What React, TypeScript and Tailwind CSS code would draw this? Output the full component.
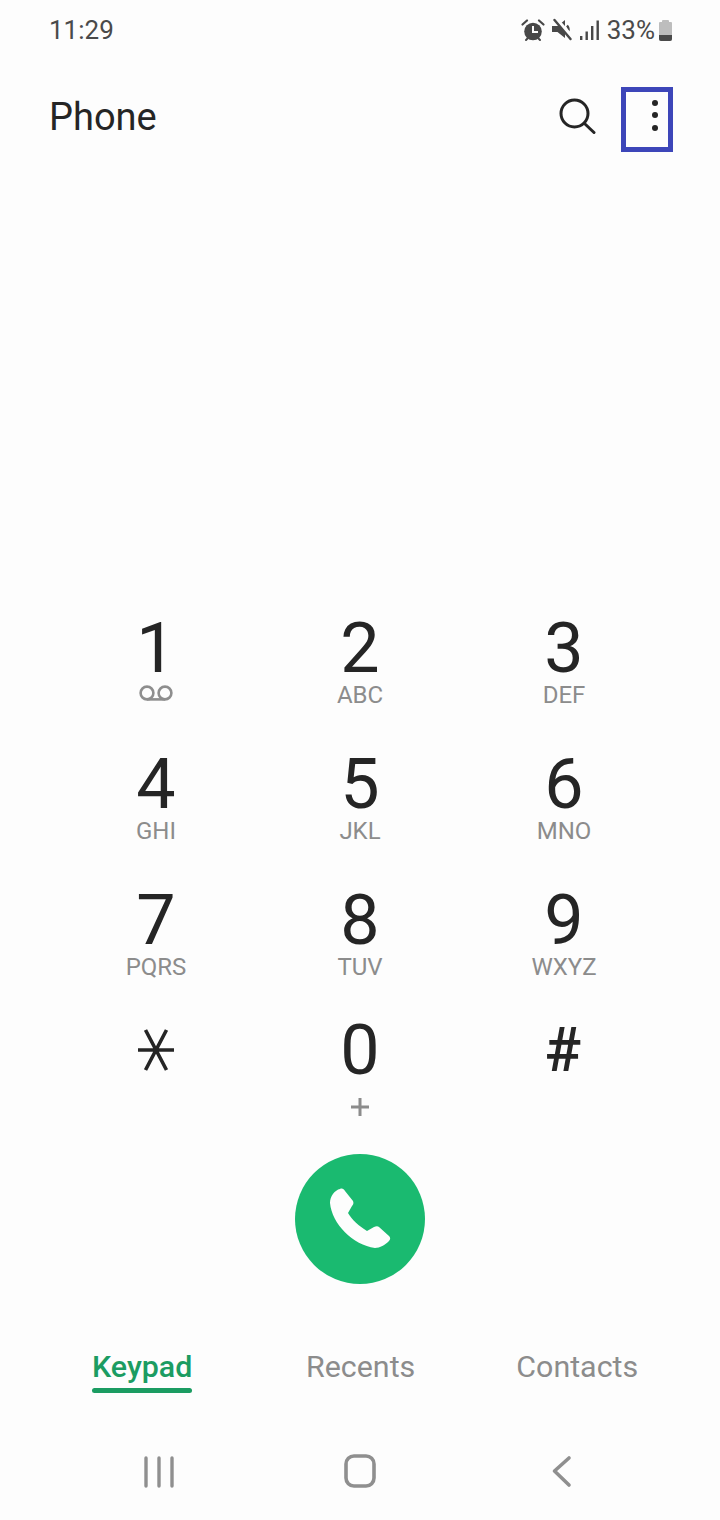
import React from "react";

const keys: { d: string; s?: string }[] = [
  { d: "1" },
  { d: "2", s: "ABC" },
  { d: "3", s: "DEF" },
  { d: "4", s: "GHI" },
  { d: "5", s: "JKL" },
  { d: "6", s: "MNO" },
  { d: "7", s: "PQRS" },
  { d: "8", s: "TUV" },
  { d: "9", s: "WXYZ" },
];

function Voicemail() {
  return (
    <svg width="36" height="16" viewBox="0 0 36 16" fill="none" stroke="#8e8e8e" strokeWidth="2.6" className="mb-[5px]">
      <circle cx="9" cy="8" r="6.4" />
      <circle cx="27" cy="8" r="6.4" />
      <path d="M9 14.4h18" />
    </svg>
  );
}

function Key({ d, s, voice }: { d: React.ReactNode; s?: string; voice?: boolean }) {
  return (
    <div className="flex flex-col items-center">
      <div className="h-[64px] flex items-center justify-center text-[70px] leading-[64px] text-[#252525]">{d}</div>
      <div className="h-[30px] flex items-center justify-center text-[24px] leading-[28px] text-[#8c8c8c]">
        {voice ? <Voicemail /> : s}
      </div>
    </div>
  );
}

export default function App() {
  return (
    <div className="w-[720px] h-[1520px] bg-[#fdfdfd] flex flex-col font-['Roboto',sans-serif] overflow-hidden">
      <div className="h-[60px] pl-[49px] pr-[48px] pt-[14px] flex justify-between items-start text-[#4a4a4a]">
        <span className="text-[26px] leading-[32px]">11:29</span>
        <div className="flex items-center h-[32px]">
          <svg width="24" height="24" viewBox="0 0 24 24" fill="#484848" className="mr-[7px]">
            <circle cx="12" cy="13.5" r="8.8" />
            <path d="M1.5 6.5 6 2.5M22.5 6.5 18 2.5" stroke="#484848" strokeWidth="2.2" strokeLinecap="round" />
            <path d="M12 8v6h5" stroke="#fdfdfd" strokeWidth="2" fill="none" />
            <path d="M5 22l2-2M19 22l-2-2" stroke="#484848" strokeWidth="2" strokeLinecap="round" />
          </svg>
          <svg width="20" height="24" viewBox="0 0 20 24" fill="#484848" className="mr-[8px]">
            <path d="M0 8h5.5L13 2v18l-7.500-6H0z" />
            <path d="M15 7.500c1.500 1.800 2 3.800 1.500 6" stroke="#484848" strokeWidth="2.200" fill="none" />
            <path d="M4.500 2 20 19" stroke="#fdfdfd" strokeWidth="4.500" />
            <path d="M2.500 2 18.500 21" stroke="#484848" strokeWidth="2.400" strokeLinecap="round" />
          </svg>
          <svg width="19" height="20" viewBox="0 0 19 20" fill="#484848" className="mr-[8px]">
            <rect x="0" y="16" width="2.4" height="4" />
            <rect x="5.5" y="11.5" width="2.4" height="8.5" />
            <rect x="11" y="6" width="2.4" height="14" />
            <rect x="16.5" y="0.5" width="2.4" height="19.500" />
          </svg>
          <span className="text-[26px] leading-[32px] mr-[4px]">33%</span>
          <div className="w-[13px] h-[21px] flex flex-col">
            <div className="h-[2px] w-[7px] mx-auto bg-[#bdbdbd] rounded-t-[1px]" />
            <div className="flex-1 bg-[#bdbdbd] rounded-t-[1px] flex flex-col justify-end rounded-b-[2px] overflow-hidden">
              <div className="h-[6px] bg-[#4a4a4a]" />
            </div>
          </div>
        </div>
      </div>

      <div className="h-[92px] pl-[49px] pr-[47px] flex justify-between items-start">
        <h1 className="text-[38px] leading-[44px] font-normal text-[#252525] mt-[35px]">Phone</h1>
        <div className="flex items-start">
          <svg width="38" height="38" viewBox="0 0 38 38" fill="none" stroke="#252525" strokeWidth="3" strokeLinecap="round" className="mr-[25px] mt-[37px]">
            <circle cx="16.5" cy="16.5" r="13.5" />
            <path d="M26.5 26.5 36 35.5" />
          </svg>
          <button className="w-[52px] h-[65px] mt-[27px] border-[5px] border-[#3d46b9] flex flex-col items-center justify-center gap-[6.5px] pl-[16px] pb-[9px] box-border">
            <span className="w-[6px] h-[6px] rounded-full bg-[#252525]" />
            <span className="w-[6px] h-[6px] rounded-full bg-[#252525]" />
            <span className="w-[6px] h-[6px] rounded-full bg-[#252525]" />
          </button>
        </div>
      </div>

      <div className="mt-[464px] px-[54px] grid grid-cols-3 auto-rows-[136px]">
        {keys.map((k) => (
          <Key key={k.d} d={k.d} s={k.s} voice={k.d === "1"} />
        ))}
      </div>

      <div className="-mt-[6px] px-[54px] grid grid-cols-3">
        <Key d={<svg width="36" height="42" viewBox="0 0 36 42" stroke="#252525" strokeWidth="3.6" fill="none"><path d="M0 21h36M7.500 41 28.500 1M28.500 41 7.500 1" /></svg>} />
        <div className="flex flex-col items-center">
          <div className="h-[64px] flex items-center justify-center text-[70px] leading-[64px] text-[#252525]">0</div>
          <div className="h-[50px] flex items-center justify-center text-[#8c8c8c]">
            <svg width="18" height="18" viewBox="0 0 18 18" stroke="#8c8c8c" strokeWidth="3"><path d="M0 9h18M9 0v18" /></svg>
          </div>
        </div>
        <div className="h-[64px] flex items-center justify-center text-[61px] leading-[64px] text-[#252525] font-medium pr-[2px]">#</div>
      </div>

      <div className="flex justify-center mt-[22px]">
        <button className="w-[130px] h-[130px] rounded-full bg-[#1aba70] flex items-center justify-center">
          <svg width="70" height="70" viewBox="0 0 70 70" fill="#fdfdfd">
            <path d="M5 19C5 12 10 6 15 5C17 4 19 5 20 7L28 17C29 19 28 21 27 22L23 29C27 36 34 42 42 47L49 43C51 42 53 42 54 43L64 52C66 54 65 56 64 57C60 61 55 64 50 64C28 61 7 40 5 19Z" />
          </svg>
        </button>
      </div>

      <div className="mt-[63px] relative h-[60px] text-[30.4px] leading-[40px] text-[#8c8c8c]">
        <div className="flex">
          <div className="ml-[92px] w-[100px] flex flex-col">
            <span className="font-medium text-[#1b9c62] text-center">Keypad</span>
            <div className="h-[5px] mt-[1px] rounded-full bg-[#1b9c62]" />
          </div>
          <span className="ml-[114px]">Recents</span>
          <span className="ml-[101px]">Contacts</span>
        </div>
      </div>

      <div className="mt-[47px] flex">
        <div className="w-[343px] pl-[144px] pt-[2px]">
          <svg width="30" height="32" viewBox="0 0 30 32" fill="none" stroke="#8f8f8f" strokeWidth="3.4" strokeLinecap="round">
            <path d="M2 2v28M15 2v28M28 2v28" />
          </svg>
        </div>
        <svg width="34" height="36" viewBox="0 0 34 36" fill="none" stroke="#8f8f8f" strokeWidth="3.6">
          <rect x="3" y="2" width="28" height="30" rx="8" />
        </svg>
        <div className="ml-[172px] pt-[1px]">
          <svg width="24" height="34" viewBox="0 0 24 34" fill="none" stroke="#8f8f8f" strokeWidth="3.6" strokeLinecap="round" strokeLinejoin="round">
            <path d="M20 3 5.500 16 20 30" />
          </svg>
        </div>
      </div>
    </div>
  );
}
